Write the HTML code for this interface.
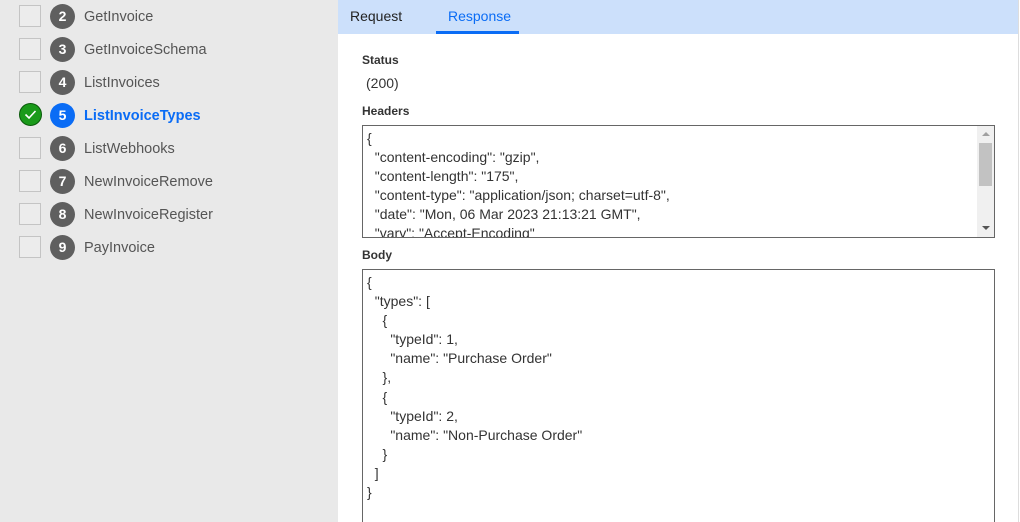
<!DOCTYPE html>
<html><head><style>
*{margin:0;padding:0;box-sizing:border-box}
html,body{width:1020px;height:522px;overflow:hidden}
body{background:#fff;font-family:"Segoe UI","Liberation Sans",sans-serif;position:relative}
.side{position:absolute;left:0;top:0;width:338px;height:522px;background:#e9e9e9}
.row{position:absolute;left:0;height:33px;width:338px}
.cb{position:absolute;left:19px;top:5px;width:22px;height:22px;border:1px solid #c4c4c4;background:#ececec}
.ok{position:absolute;left:19px;top:4px;width:23px;height:23px;border-radius:50%;background:#1a9a1a;border:1px solid #0a5a0a}
.num{position:absolute;left:50px;top:4px;width:25px;height:25px;border-radius:50%;background:#5f5f5f;color:#fff;font-size:14px;font-weight:bold;text-align:center;line-height:25px}
.lbl{position:absolute;left:84px;top:7px;font-size:14.5px;color:#555;line-height:20px}
.main{position:absolute;left:338px;top:0;width:681px;height:522px;background:#fff;border-right:1px solid #ddd;overflow:hidden}
.tabs{height:34px;background:#cce0fb;position:relative}
.tab{position:absolute;top:8px;font-size:14px;color:#222}
.ul{position:absolute;left:98px;top:31px;width:83px;height:3px;background:#0a6cf5}
.h{position:absolute;left:24px;font-size:12px;font-weight:bold;color:#333}
.box{position:absolute;left:24px;width:633px;border:1px solid #666;font-size:14px;color:#333;line-height:19.1px;padding:3px 0 0 4px;white-space:pre;overflow:hidden;font-family:"Segoe UI","Liberation Sans",sans-serif}
</style></head><body>
<div class="side">
<div class="row" style="top:0"><div class="cb"></div><div class="num">2</div><div class="lbl">GetInvoice</div></div>
<div class="row" style="top:33px"><div class="cb"></div><div class="num">3</div><div class="lbl">GetInvoiceSchema</div></div>
<div class="row" style="top:66px"><div class="cb"></div><div class="num">4</div><div class="lbl">ListInvoices</div></div>
<div class="row" style="top:99px"><div class="ok"><svg width="21" height="21" viewBox="0 0 21 21"><path d="M5.5 10.5l3.5 3.5 6.5-7" stroke="#fff" stroke-width="1.6" fill="none"/></svg></div><div class="num" style="background:#0a6cf5">5</div><div class="lbl" style="color:#0a6cf5;font-weight:bold">ListInvoiceTypes</div></div>
<div class="row" style="top:132px"><div class="cb"></div><div class="num">6</div><div class="lbl">ListWebhooks</div></div>
<div class="row" style="top:165px"><div class="cb"></div><div class="num">7</div><div class="lbl">NewInvoiceRemove</div></div>
<div class="row" style="top:198px"><div class="cb"></div><div class="num">8</div><div class="lbl">NewInvoiceRegister</div></div>
<div class="row" style="top:231px"><div class="cb"></div><div class="num">9</div><div class="lbl">PayInvoice</div></div>
</div>
<div class="main">
<div class="tabs"><div class="tab" style="left:12px">Request</div><div class="tab" style="left:110px;color:#0a6cf5">Response</div><div class="ul"></div></div>
<div class="h" style="top:53px">Status</div>
<div style="position:absolute;left:28px;top:75px;font-size:14px;color:#333">(200)</div>
<div class="h" style="top:104px">Headers</div>
<div class="box" style="top:125px;height:113px">{
  "content-encoding": "gzip",
  "content-length": "175",
  "content-type": "application/json; charset=utf-8",
  "date": "Mon, 06 Mar 2023 21:13:21 GMT",
  "vary": "Accept-Encoding"
}<div style="position:absolute;right:0;top:0;width:17px;height:111px;background:#f0f0f0"><div style="position:absolute;left:5px;top:6px;border:4px solid transparent;border-bottom:4px solid #a0a0a0;border-top:0"></div><div style="position:absolute;left:2px;top:17px;width:13px;height:43px;background:#c2c2c2"></div><div style="position:absolute;left:5px;top:100px;border:4px solid transparent;border-top:4px solid #555;border-bottom:0"></div></div></div>
<div class="h" style="top:248px">Body</div>
<div class="box" style="top:269px;height:253px;border-bottom:none">{
  "types": [
    {
      "typeId": 1,
      "name": "Purchase Order"
    },
    {
      "typeId": 2,
      "name": "Non-Purchase Order"
    }
  ]
}</div>
</div>
</body></html>
